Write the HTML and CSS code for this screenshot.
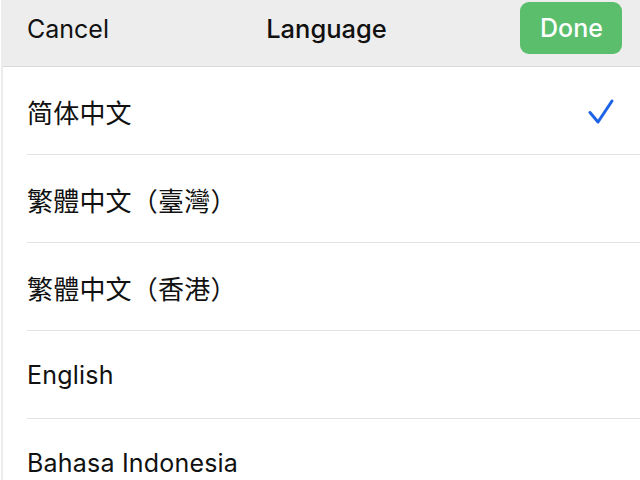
FILE: index.html
```html
<!DOCTYPE html>
<html>
<head>
<meta charset="utf-8">
<link rel="stylesheet" href="styles.css">
</head>
<body>
<div class="page">
  <header class="bar">
    <span class="bar-side">Cancel</span>
    <span class="bar-title">Language</span>
    <button class="done">Done</button>
  </header>
  <ul class="list">
    <li class="row"><span class="label" lang="zh-CN">简体中文</span>
      <svg class="check" width="28" height="28" viewBox="0 0 28 28"><polyline points="3,14.5 11,24 25,3" fill="none" stroke="#1e63e6" stroke-width="3" stroke-linecap="round" stroke-linejoin="round"/></svg>
    </li>
    <li class="row"><span class="label tc" lang="zh-TW">繁體中文（臺灣）</span></li>
    <li class="row"><span class="label tc" lang="zh-HK">繁體中文（香港）</span></li>
    <li class="row"><span class="label">English</span></li>
    <li class="row"><span class="label">Bahasa Indonesia</span></li>
  </ul>
</div>
</body>
</html>
```
FILE: styles.css
```css
html, body {
  margin: 0;
  padding: 0;
  background: #ffffff;
}
body {
  font-family: Inter, "Noto Sans CJK SC", sans-serif;
  color: #111111;
  width: 640px;
  height: 480px;
  overflow: hidden;
}
.page {
  border-left: 2px solid #ececec;
  margin-left: 1px;
  height: 480px;
  overflow: hidden;
}
.bar {
  height: 67px;
  box-sizing: border-box;
  background: #ededed;
  border-bottom: 1px solid #dadada;
  display: grid;
  grid-template-columns: 1fr auto 1fr;
  align-items: start;
  padding: 2px 18px 0 27px;
  margin-left: -3px;
}
.bar-side {
  font-size: 25px;
  line-height: 54px;
  justify-self: start;
}
.bar-title {
  font-size: 25.5px;
  line-height: 54px;
  font-weight: 500;
  padding-left: 4px;
}
.done {
  justify-self: end;
  width: 102px;
  height: 52px;
  border: none;
  border-radius: 9px;
  background: #5abe6d;
  color: #ffffff;
  font-family: Inter, sans-serif;
  font-size: 25px;
  font-weight: 500;
  padding: 0 0 0 1px;
}
.list {
  list-style: none;
  margin: 0;
  padding: 0 0 0 24px;
}
.row {
  height: 88px;
  box-sizing: border-box;
  border-bottom: 1px solid #e3e3e3;
  display: flex;
  align-items: center;
  justify-content: space-between;
  padding-right: 25px;
  padding-top: 1px;
}
.label {
  font-size: 25px;
  letter-spacing: 0.2px;
}
.label:lang(zh-CN) {
  font-family: Inter, "Noto Sans CJK SC", sans-serif;
  font-size: 26px;
}
.tc {
  font-family: Inter, "Noto Sans CJK TC", sans-serif;
  font-size: 26px;
}
.check {
  display: block;
  margin-top: 1px;
}
```
